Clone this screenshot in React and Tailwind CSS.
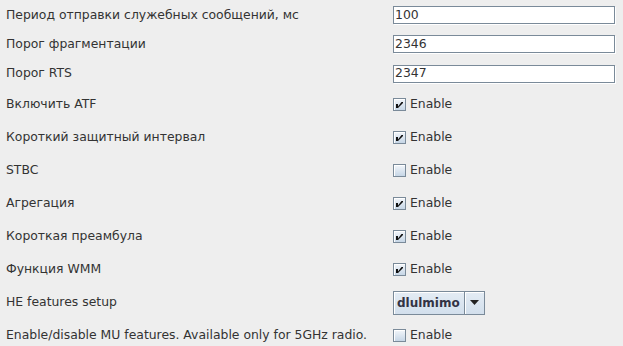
const rows = [
  { label: 'Период отправки служебных сообщений, мс', type: 'text', value: '100', h: 'h-[28px]' },
  { label: 'Порог фрагментации', type: 'text', value: '2346', h: 'h-[30px]' },
  { label: 'Порог RTS', type: 'text', value: '2347', h: 'h-[29px]' },
  { label: 'Включить ATF', type: 'check', checked: true, h: 'h-[33px]' },
  { label: 'Короткий защитный интервал', type: 'check', checked: true, h: 'h-[33px]' },
  { label: 'STBC', type: 'check', checked: false, h: 'h-[33px]' },
  { label: 'Агрегация', type: 'check', checked: true, h: 'h-[33px]' },
  { label: 'Короткая преамбула', type: 'check', checked: true, h: 'h-[33px]' },
  { label: 'Функция WMM', type: 'check', checked: true, h: 'h-[33px]' },
  { label: 'HE features setup', type: 'combo', value: 'dlulmimo', h: 'h-[33px]' },
  { label: 'Enable/disable MU features. Available only for 5GHz radio.', type: 'check', checked: false, h: 'h-[33px]' },
]

export default function App() {
  return (
    <div className="w-[623px] h-[346px] overflow-hidden pt-[1px] bg-[#eeeeee] text-[#333333] text-[12px] font-['DejaVu_Sans',sans-serif]">
      {rows.map((row, i) => (
        <div key={i} className={`flex items-center ${row.h}`}>
          <div className="w-[393px] pl-[6px] text-[12.4px]">{row.label}</div>
          {row.type === 'text' && <TextField value={row.value} />}
          {row.type === 'check' && <CheckBox checked={row.checked} />}
          {row.type === 'combo' && <Combo value={row.value} />}
        </div>
      ))}
    </div>
  )
}

function TextField({ value }) {
  return (
    <div className="w-[222px] h-[18px] bg-white border border-[#7a8a99] shadow-[1px_1px_0_#ffffff] flex items-center pl-[1px] leading-none text-[12.4px]">
      {value}
    </div>
  )
}

function CheckBox({ checked }) {
  return (
    <div className="flex items-center gap-[4px] text-[12.4px]">
      <div className="w-[13px] h-[13px] border border-[#7a8a99] bg-gradient-to-b from-[#f3f6fa] to-[#c6d6e6] shadow-[inset_1px_1px_0_#ffffff] flex items-center justify-center">
        {checked && (
          <svg width="11" height="11" viewBox="0 0 11 11">
            <path d="M2 5h2v2.5L7.5 3H9v1L4 9H2z" fill="#111" />
          </svg>
        )}
      </div>
      <span>Enable</span>
    </div>
  )
}

function Combo({ value }) {
  return (
    <div className="flex h-[24px] border border-[#7a8a99] bg-gradient-to-b from-[#e4ecf4] to-[#d2dfec]">
      <div className="w-[71px] flex items-center pl-[3px] font-bold text-[#333344] border-r border-[#7a8a99] shadow-[inset_1px_1px_0_#ffffff]">
        {value}
      </div>
      <div className="w-[19px] flex items-center justify-center shadow-[inset_1px_1px_0_#ffffff]">
        <svg width="9" height="5" viewBox="0 0 9 5">
          <path d="M0 0h9L4.5 5z" fill="#222" />
        </svg>
      </div>
    </div>
  )
}
